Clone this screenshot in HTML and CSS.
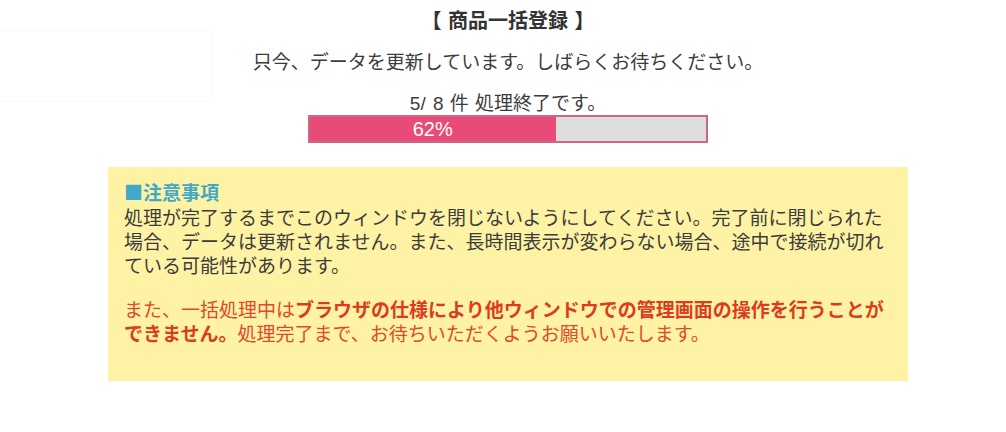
FILE: index.html
```html
<!DOCTYPE html>
<html lang="ja">
<head>
<meta charset="utf-8">
<title>商品一括登録</title>
<link rel="stylesheet" href="styles.css">
</head>
<body>
<div class="ghost-panel"></div>
<main class="page">
  <h1 class="title">【 商品一括登録 】</h1>
  <p class="lead">只今、データを更新しています。しばらくお待ちください。</p>
  <p class="count"><span class="num">5/ 8</span> 件 処理終了です。</p>
  <div class="progress">
    <div class="progress-fill" style="width: 62%;"><span class="pct">62%</span></div>
  </div>
  <section class="notice">
    <h2 class="notice-title">■注意事項</h2>
    <p class="notice-text">処理が完了するまでこのウィンドウを閉じないようにしてください。完了前に閉じられた場合、データは更新されません。また、長時間表示が変わらない場合、途中で接続が切れ<br>ている可能性があります。</p>
    <p class="notice-warn">また、一括処理中は<strong>ブラウザの仕様により他ウィンドウでの管理画面の操作を行うことができません。</strong>処理完了まで、お待ちいただくようお願いいたします。</p>
  </section>
</main>
</body>
</html>
```

FILE: styles.css
```css
html, body {
  margin: 0;
  padding: 0;
  background: #ffffff;
}

body {
  font-family: "Noto Sans CJK JP", "Noto Sans", sans-serif;
  color: #3a3a3a;
  position: relative;
}

.ghost-panel {
  position: absolute;
  left: 0;
  top: 30px;
  width: 212px;
  height: 70px;
  border-top: 1px solid #f9f9f9;
  border-bottom: 1px solid #f9f9f9;
  box-shadow: 2px 0 3px rgba(0, 0, 0, 0.02);
}

.page {
  position: relative;
  padding-left: 10px;
  display: flex;
  flex-direction: column;
  align-items: center;
  text-align: center;
}

.title {
  margin: 8px 0 0;
  height: 24px;
  font-size: 20px;
  line-height: 24px;
  font-weight: bold;
  color: #333333;
  word-spacing: 2px;
}

.lead {
  margin: 17px 0 0;
  height: 24px;
  font-size: 19px;
  line-height: 24px;
  color: #3c3c3c;
}

.count {
  margin: 17px 0 0;
  height: 24px;
  font-size: 19px;
  line-height: 24px;
  color: #3c3c3c;
  word-spacing: 2px;
}

.num {
  font-family: "Liberation Sans", Arial, sans-serif;
}

.progress {
  margin-top: 1px;
  box-sizing: border-box;
  width: 400px;
  height: 28px;
  border: 2px solid #cf6683;
  background: #dddddd;
  display: flex;
}

.progress-fill {
  background: #e84b77;
  height: 100%;
  display: flex;
  align-items: center;
  justify-content: center;
}

.pct {
  font-family: "Liberation Sans", Arial, sans-serif;
  font-size: 20px;
  color: #ffffff;
  line-height: 24px;
}

.notice {
  margin-top: 24px;
  box-sizing: border-box;
  width: 800px;
  padding: 13px 16px 36px;
  background: #fef3a4;
  text-align: left;
}

.notice-title {
  margin: 0;
  font-size: 19px;
  line-height: 24px;
  font-weight: bold;
  color: #41a9c7;
}

.notice-text {
  margin: 1px 0 0;
  font-size: 19px;
  line-height: 24px;
  color: #3c3c3c;
}

.notice-warn {
  margin: 20px 0 0;
  font-size: 19px;
  line-height: 24px;
  color: #e2472e;
}

.notice-warn strong {
  font-weight: bold;
  color: #dc3b22;
}
```
